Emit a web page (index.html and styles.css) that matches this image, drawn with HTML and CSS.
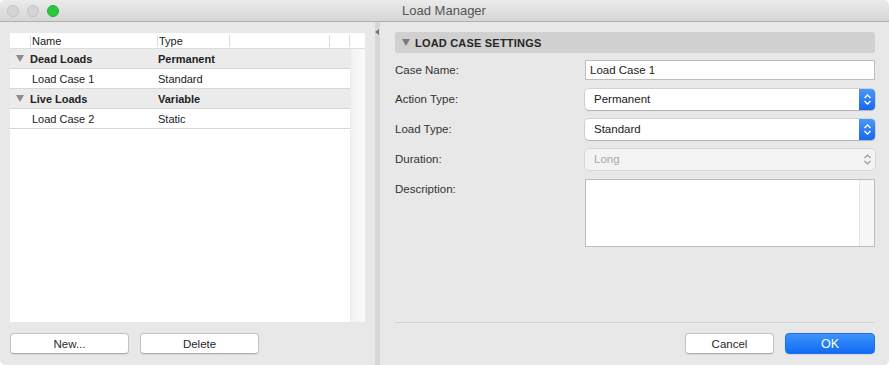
FILE: index.html
```html
<!DOCTYPE html>
<html lang="en">
<head>
    <meta charset="UTF-8">
    <title>Load Manager</title>
    <link rel="stylesheet" href="styles.css">
</head>
<body>
    <div class="window">
        <div class="titlebar">
            <div class="lights">
                <span class="light"></span>
                <span class="light"></span>
                <span class="light green"></span>
            </div>
            <div class="title">Load Manager</div>
        </div>
        <div class="content">
            <!-- left: list of load groups -->
            <div class="left">
                <div class="list">
                    <div class="list_head">
                        <span class="hcell c_name">Name</span>
                        <span class="hcell c_type">Type</span>
                        <span class="hcell c_a"></span>
                        <span class="hcell c_b"></span>
                        <span class="hcell c_c"></span>
                    </div>
                    <div class="list_body">
                        <div class="rows">
                            <div class="row group"><i class="tri"></i><span class="c_name">Dead Loads</span><span class="c_type">Permanent</span></div>
                            <div class="row"><span class="c_name child">Load Case 1</span><span class="c_type">Standard</span></div>
                            <div class="row group"><i class="tri"></i><span class="c_name">Live Loads</span><span class="c_type">Variable</span></div>
                            <div class="row"><span class="c_name child">Load Case 2</span><span class="c_type">Static</span></div>
                        </div>
                        <div class="scroll"></div>
                    </div>
                </div>
                <div class="left_btns">
                    <button class="btn">New...</button>
                    <button class="btn">Delete</button>
                </div>
            </div>
            <div class="divider"><i class="arrow"></i></div>
            <!-- right: settings -->
            <div class="right">
                <div class="section"><i class="tri"></i>LOAD CASE SETTINGS</div>
                <div class="form">
                    <label>Case Name:</label>
                    <div class="input">Load Case 1</div>
                    <label>Action Type:</label>
                    <div class="select">Permanent<span class="stepper"><svg width="9" height="13" viewBox="0 0 9 13"><path d="M1.5 5 L4.5 2 L7.5 5 M1.5 8 L4.5 11 L7.5 8" fill="none" stroke="#fff" stroke-width="1.3"/></svg></span></div>
                    <label>Load Type:</label>
                    <div class="select">Standard<span class="stepper"><svg width="9" height="13" viewBox="0 0 9 13"><path d="M1.5 5 L4.5 2 L7.5 5 M1.5 8 L4.5 11 L7.5 8" fill="none" stroke="#fff" stroke-width="1.3"/></svg></span></div>
                    <label>Duration:</label>
                    <div class="select disabled">Long<span class="stepper"><svg width="9" height="13" viewBox="0 0 9 13"><path d="M1.5 5 L4.5 2 L7.5 5 M1.5 8 L4.5 11 L7.5 8" fill="none" stroke="#9a9a9a" stroke-width="1.2"/></svg></span></div>
                    <label>Description:</label>
                    <div class="textarea"><span class="ta_scroll"></span></div>
                </div>
                <div class="footer">
                    <button class="btn cancel">Cancel</button>
                    <button class="btn ok">OK</button>
                </div>
            </div>
        </div>
    </div>
</body>
</html>
```

FILE: styles.css
```css
*{
    margin: 0px;
    padding: 0px;
    box-sizing: border-box;
}
body{
    background: #ffffff;
    font-family: "Liberation Sans", Arial, sans-serif;
    font-size: 12px;
    color: #222222;
}
.window{
    width: 889px;
    height: 365px;
    background: #e8e8e8;
    border-radius: 5px;
    overflow: hidden;
    display: flex;
    flex-direction: column;
}
.titlebar{
    height: 22px;
    flex: none;
    background: linear-gradient(#ebebeb, #d5d5d5);
    border-bottom: 1px solid #b1b1b1;
    display: flex;
    align-items: center;
    position: relative;
}
.lights{
    display: flex;
    gap: 8px;
    padding-left: 7px;
}
.light{
    width: 12px;
    height: 12px;
    border-radius: 50%;
    background: #d4d4d4;
    border: 1px solid #c2c2c2;
}
.light.green{
    background: #2ac73f;
    border-color: #20ad32;
}
.title{
    flex: 1;
    text-align: center;
    font-size: 13px;
    color: #555555;
    margin-right: 60px;
}
.content{
    flex: 1;
    display: flex;
}
.left{
    width: 375px;
    padding: 11px 10px 0 10px;
    display: flex;
    flex-direction: column;
}
.list{
    height: 289px;
    background: #ffffff;
    display: flex;
    flex-direction: column;
}
.list_head{
    height: 16px;
    display: flex;
    border-bottom: 1px solid #dddddd;
    align-items: center;
}
.hcell{
    height: 12px;
    line-height: 12px;
    border-left: 1px solid #dcdcdc;
    font-size: 11px;
    padding-left: 1px;
    color: #222;
}
.list_head .c_name{
    margin-left: 20px;
    width: 127px;
}
.list_head .c_type{
    width: 72px;
}
.c_a{ width: 100px; }
.c_b{ width: 20px; }
.c_c{ flex: 1; }
.list_body{
    flex: 1;
    display: flex;
}
.rows{
    flex: 1;
}
.scroll{
    width: 15px;
    background: linear-gradient(to right, #f2f2f2, #fafafa);
    border-left: 1px solid #ebebeb;
}
.row{
    height: 20px;
    display: flex;
    align-items: center;
    border-bottom: 1px solid #d6d6d6;
    font-size: 11px;
}
.row.group{
    background: #ebebeb;
    font-weight: bold;
}
.row .c_name{
    width: 147px;
    padding-left: 20px;
}
.row.group .c_name{
    padding-left: 0;
    width: 127px;
}
.row .c_name.child{
    padding-left: 22px;
}
.row .c_type{
    padding-left: 1px;
}
.tri{
    width: 0;
    height: 0;
    border-left: 4px solid transparent;
    border-right: 4px solid transparent;
    border-top: 7px solid #8c8c8c;
    margin-left: 6px;
    margin-right: 6px;
}
.left_btns{
    display: flex;
    gap: 11px;
    margin-top: 11px;
}
.btn{
    width: 119px;
    height: 21px;
    background: #ffffff;
    border: 1px solid #c4c4c4;
    border-bottom-color: #b0b0b0;
    border-radius: 4px;
    font-family: "Liberation Sans", Arial, sans-serif;
    font-size: 11.5px;
    color: #2a2a2a;
    box-shadow: 0 0.5px 1px rgba(0,0,0,0.08);
}
.divider{
    width: 5px;
    background: #d7d7d7;
    position: relative;
}
.arrow{
    position: absolute;
    top: 7px;
    left: 0px;
    width: 0;
    height: 0;
    border-top: 3px solid transparent;
    border-bottom: 3px solid transparent;
    border-right: 4px solid #777777;
}
.right{
    flex: 1;
    padding: 10px 14px 0 15px;
    display: flex;
    flex-direction: column;
}
.section{
    height: 21px;
    background: #d0d0d0;
    border-radius: 3px;
    display: flex;
    align-items: center;
    font-size: 11px;
    font-weight: bold;
    color: #262626;
    letter-spacing: 0.2px;
}
.section .tri{
    margin-left: 7px;
    margin-right: 5px;
    border-top-color: #7a7a7a;
}
.form{
    display: grid;
    grid-template-columns: 190px 1fr;
    row-gap: 9px;
    margin-top: 7px;
    font-size: 11.5px;
}
.form label{
    color: #333;
    line-height: 20px;
}
.input{
    height: 20px;
    background: #fff;
    border: 1px solid #bdbdbd;
    padding-left: 4px;
    line-height: 18px;
    font-size: 11.5px;
    color: #222;
}
.select{
    height: 21px;
    background: #fff;
    border-radius: 4px;
    box-shadow: 0 0 0 0.5px rgba(0,0,0,0.2), 0 1px 1px rgba(0,0,0,0.15);
    padding-left: 9px;
    line-height: 21px;
    font-size: 11.5px;
    position: relative;
}
.stepper{
    position: absolute;
    right: 0;
    top: 0;
    width: 16px;
    height: 21px;
    border-radius: 0 4px 4px 0;
    background: linear-gradient(#4a97f9, #1767f2);
    display: flex;
    align-items: center;
    justify-content: center;
}
.select.disabled{
    background: #f3f3f3;
    color: #a8a8a8;
    box-shadow: 0 0 0 0.5px rgba(0,0,0,0.15);
}
.select.disabled .stepper{
    background: none;
}
.textarea{
    height: 68px;
    background: #fff;
    border: 1px solid #bdbdbd;
    display: flex;
    justify-content: flex-end;
}
.ta_scroll{
    width: 15px;
    background: #f7f7f7;
    border-left: 1px solid #e6e6e6;
}
.footer{
    margin-top: auto;
    margin-bottom: 11px;
    border-top: 1px solid #d2d2d2;
    padding-top: 10px;
    display: flex;
    justify-content: flex-end;
    gap: 11px;
}
.btn.cancel{
    width: 89px;
}
.btn.ok{
    width: 90px;
    background: linear-gradient(#3e93fa, #106cf4);
    border: 1px solid #1a6ff0;
    color: #fff;
    font-size: 12.5px;
}
```
